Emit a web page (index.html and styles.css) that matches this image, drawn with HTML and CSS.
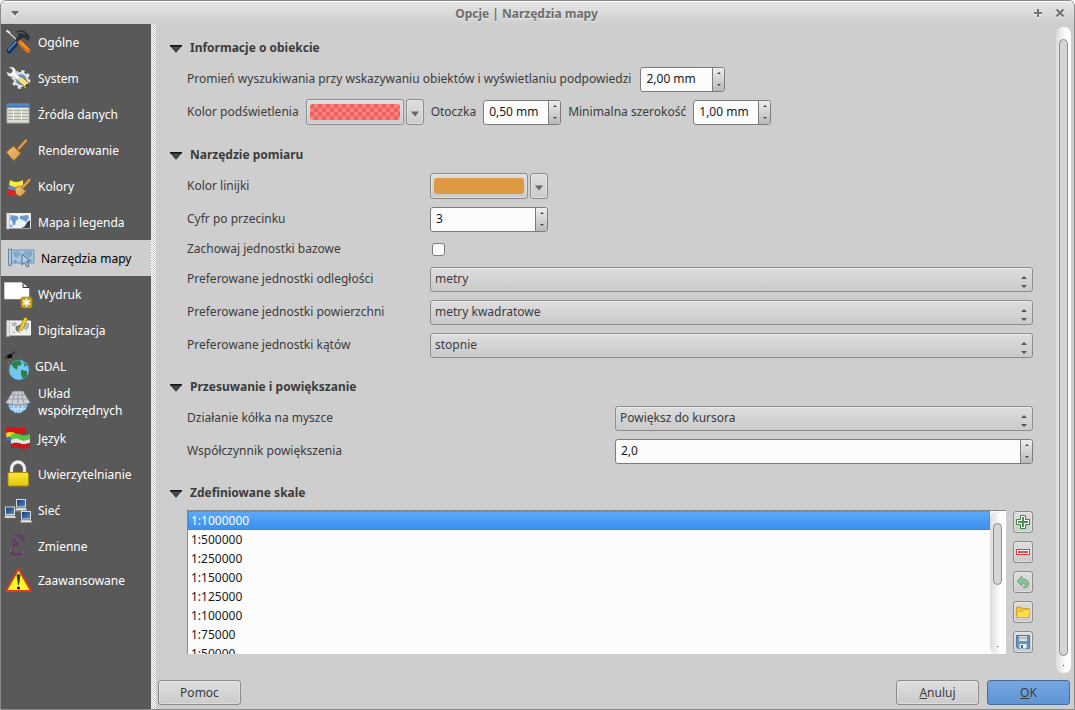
FILE: index.html
```html
<!DOCTYPE html>
<html lang="pl">
<head>
<meta charset="utf-8">
<title>Opcje | Narzędzia mapy</title>
<link rel="stylesheet" href="styles.css">
</head>
<body>
<svg class="defs" aria-hidden="true">
  <symbol id="up" viewBox="0 0 4 2"><path d="M0 2L2 0L4 2Z"/></symbol>
  <symbol id="down" viewBox="0 0 4 2"><path d="M0 0L2 2L4 0Z"/></symbol>
  <symbol id="fold" viewBox="0 0 12 8"><path d="M.5 .5H11.500L6 7.500Z" fill="#4a4a4a"/><path d="M.5 .8L6 7.200L11.500 .8" fill="none" stroke="#333"/><path d="M0 .8H12" stroke="#111" stroke-width="1.500"/></symbol>
  <linearGradient id="gold" x1="0" y1="0" x2="0" y2="1"><stop offset="0" stop-color="#f8e838"/><stop offset="1" stop-color="#e4c410"/></linearGradient>
  <linearGradient id="wood" x1="0" y1="0" x2="1" y2="1"><stop offset="0" stop-color="#f3c887"/><stop offset="1" stop-color="#d8963f"/></linearGradient>
  <linearGradient id="screen" x1="0" y1="0" x2="1" y2="1"><stop offset="0" stop-color="#0d3878"/><stop offset="1" stop-color="#5b8cc8"/></linearGradient>
</svg>
<div class="window">
  <header class="titlebar">
    <button class="tb" aria-label="Menu okna"><svg width="10" height="7" viewBox="0 0 10 7"><path d="M1 1H9L5 5.500Z" fill="#666"/><path d="M2 5L5 7L8 4" fill="none" stroke="#fff" stroke-opacity=".6"/></svg></button>
    <h1>Opcje | Narzędzia mapy</h1>
    <button class="tb" aria-label="Maksymalizuj"><svg width="10" height="10" viewBox="0 0 10 10"><path d="M1 6H9M5 2V10" stroke="#fff" stroke-width="2"/><path d="M1 5H9M5 1V9" stroke="#737373" stroke-width="2"/></svg></button>
    <button class="tb" aria-label="Zamknij"><svg width="10" height="10" viewBox="0 0 10 10"><path d="M1.500 2.500L8.500 9.500M8.500 2.500L1.500 9.500" stroke="#fff" stroke-width="2"/><path d="M1.500 1.500L8.500 8.500M8.500 1.500L1.500 8.500" stroke="#737373" stroke-width="2.300"/></svg></button>
  </header>
  <div class="body">
    <nav class="sidebar">
      <button class="item"><svg viewBox="0 0 34 36"><path d="M6 7L17 17" stroke="#d4d4d4" stroke-width="1.200"/><path d="M5.500 6.500L9 9" stroke="#f4f4f4" stroke-width="2"/><path d="M15 8C19 5 24 6 27 10L29 13L27 17L24 14L21 14L17 18L14.500 15.500L18 11Z" fill="#2b3133"/><path d="M16 9Q20 7 24 10" stroke="#616a6c" fill="none"/><path d="M16 18.500L8 27" stroke="#17355e" stroke-width="5" stroke-linecap="round"/><path d="M15 18L7.500 26" stroke="#5b8dca" stroke-width="1.600" stroke-linecap="round"/><path d="M19 18.500L27 26.500" stroke="#e8700a" stroke-width="4.600" stroke-linecap="round"/><path d="M19.500 18L27 25" stroke="#ffa24a" stroke-width="1.300"/></svg><span>Ogólne</span></button>
      <button class="item"><svg viewBox="0 0 34 36"><circle cx="20" cy="19.500" r="8" fill="none" stroke="#e5e8e8" stroke-width="3" stroke-dasharray="3.140 3.140"/><circle cx="20" cy="19.500" r="6.500" fill="#6c9bcb" stroke="#e4e6e6" stroke-width="2"/><path d="M8 7.500C12 6 15.500 9 15 13L20 18.500L18 21L12 16.500C9 17.500 6 15.500 5.700 12L9 13.500L11.500 12L11 9Z" fill="#f6f7f7" stroke="#999" stroke-width=".5"/><path d="M18.500 18.500L26.500 25.500" stroke="#6d5818" stroke-width="6.600"/><path d="M18.500 18.500L26 25" stroke="#f1df82" stroke-width="5"/><circle cx="26" cy="25.500" r="1.500" fill="#4a3d16"/></svg><span>System</span></button>
      <button class="item"><svg viewBox="0 0 34 36"><path d="M6 8H28V27H6Z" fill="#dcded3" stroke="#a9ada6"/><path d="M5.500 7.500H28.500V11.500H5.500Z" fill="#3f6fae"/><path d="M6 9H28" stroke="#6f9dd6"/><path d="M7 14.500H27M7 17.500H27M7 20.500H27M7 23.500H27" stroke="#a4a89f"/><path d="M12.500 12V26M20.500 12V26" stroke="#eceee6"/></svg><span>Źródła danych</span></button>
      <button class="item"><svg viewBox="0 0 34 36"><path d="M25 8.500L16.500 18" stroke="#9b611b" stroke-width="3.200" stroke-linecap="round"/><path d="M25 8.500L16.500 18" stroke="#e0a04c" stroke-width="2" stroke-linecap="round"/><path d="M5.500 20L13 14L20 21L13 28.500Q9 25 5.500 20Z" fill="url(#wood)" stroke="#b87427" stroke-width=".8"/><path d="M13 14L20 21" stroke="#8e560f" stroke-width="1.200"/><path d="M8 19L13 25M11 17L16 23" stroke="#dda255"/></svg><span>Renderowanie</span></button>
      <button class="item"><svg viewBox="0 0 34 36"><path d="M9 12Q15 16 22 12V18L15 20L8 17Z" fill="#fbe83a"/><path d="M8 17Q12 21 18 18L17 23L7 21Z" fill="#558bd0"/><path d="M7 21Q12 24 17 22L18 28Q12 26 6 27Z" fill="#e8201c"/><path d="M28.500 12L20 21" stroke="#9b611b" stroke-width="3.200" stroke-linecap="round"/><path d="M28.500 12L20 21" stroke="#e0a04c" stroke-width="2" stroke-linecap="round"/><path d="M14 21L18.500 17.500L25 23.500L19 28.500L15 26Z" fill="url(#wood)" stroke="#a7651a" stroke-width=".7"/></svg><span>Kolory</span></button>
      <button class="item"><svg viewBox="0 0 34 36"><path d="M8 10H29V23.500H8Z" fill="#edf2f6" stroke="#f3f3f3" stroke-width="1.800"/><path d="M5.500 9V25H8.500V9Z" fill="#e7e9eb" stroke="#9fa3a8" stroke-width=".6"/><path d="M10 11L16 12L18 14L15 17L14 21L12 21L11 17L9 15ZM19 12L27 11L28 14L25 18L22 16L19 15ZM10 20L12 23H9Z" fill="#6d9bd0"/><path d="M29 16V24H20Q25 23 25 19Z" fill="#36414b"/><path d="M20 24Q24 20 22 18L26 19Z" fill="#fff"/></svg><span>Mapa i legenda</span></button>
      <button class="item selected" aria-current="page"><svg viewBox="0 0 34 36"><path d="M9 10H33V23H9Z" fill="#a6c5df" stroke="#6e94b6"/><path d="M7.500 9V25.500H10.500V9Z" fill="#acc8e0" stroke="#55799c" stroke-width=".8"/><path d="M12 12L18 11L20 14L16 18L13 16ZM22 12L31 11V16L27 19L24 15Z" fill="#86a8c5"/><path d="M13 20L16 21L15 23H13ZM27 19L31 20V21H28Z" fill="#7598b7"/><path d="M21 14V25L23.500 22.500L26 27L28 26L25.500 21.500H29Z" fill="#b4cde2" stroke="#4f6f8f"/></svg><span>Narzędzia mapy</span></button>
      <button class="item"><svg viewBox="0 0 34 36"><path d="M3.500 6.500H22L28 12V23H3.500Z" fill="#fff" stroke="#ddd" stroke-width=".6"/><path d="M22 6V11.500H28Z" fill="#e4e4e4" stroke="#333"/><rect x="20" y="21" width="11" height="11" rx="2" fill="#c69d16" stroke="#a88410" stroke-width=".6"/><path d="M25.500 22.500V30.500M22 24.500L29 28.500M29 24.500L22 28.500" stroke="#fff" stroke-width="1.700"/></svg><span>Wydruk</span></button>
      <button class="item"><svg viewBox="0 0 34 36"><path d="M7 9H29.500V23H7Z" fill="#ededeb" stroke="#fff"/><path d="M5.500 8.500V24.500H8.500V8.500Z" fill="#e2e2e0" stroke="#aaa" stroke-width=".6"/><path d="M10 11L15 10L16 13L12 15ZM19 11H28V15L25 19L22 15ZM11 19L14 20L13 22Z" fill="#b5b6b2"/><path d="M15 15L19 13L20 17L18 20L15 18Z" fill="#858784" stroke="#444" stroke-width=".6"/><path d="M25 6L19.500 18" stroke="#8c7312" stroke-width="4"/><path d="M25 6L19.800 17.500" stroke="#f5d326" stroke-width="2.800"/><path d="M17.700 17L18 21.500L21.300 18.700Z" fill="#e8cc60"/></svg><span>Digitalizacja</span></button>
      <button class="item gdal"><svg viewBox="0 0 34 36"><circle cx="18" cy="22" r="10" fill="#71c7ed" stroke="#4c9cc0" stroke-width=".6"/><path d="M12 14L18 12L21 15L19 18L17 17L16 22L13 20L10 16ZM22 14L26 17L24 19ZM20 22L26 23L26 28L22 31L20 26Z" fill="#2e7f44"/><path d="M4 10L7 9M10 7L14 4" stroke="#3c3c3c" stroke-width="2"/><path d="M6.500 8.500L11 8" stroke="#000" stroke-width="3.400"/><path d="M9 11L13 15M7 13L9 20" stroke="#d06a6a" stroke-width=".8" stroke-dasharray="2 1"/></svg><span>GDAL</span></button>
      <button class="item"><svg viewBox="0 0 34 36"><circle cx="17" cy="19" r="10" fill="#8dc0ec" stroke="#4d83bd" stroke-width=".8"/><path d="M9 25H25M17 19V29M12 19Q12 25 15 29M22 19Q22 25 19 29" fill="none" stroke="#e4f2fd" stroke-width=".9"/><path d="M12 7H22L29.500 19Q17 23 4.500 19Z" fill="#ccd0d4" stroke="#6d737a" stroke-width=".7"/><path d="M10 11H24M7.500 15H27M17 7V20M14 7L11 20M20 7L23 20" stroke="#8a9097" stroke-width=".8"/></svg><span>Układ współrzędnych</span></button>
      <button class="item"><svg viewBox="0 0 34 36"><path d="M5 8Q9 6.500 14 7.500T25 7.500V14H14Q9 11.500 5 13Z" fill="#d01616"/><path d="M5 13Q9 11 14 13V18H5.500Z" fill="#f4d71d"/><path d="M5.500 17.500Q8 16 10 17V22Q8 20 6 21.500Z" fill="#3f70bf"/><path d="M10 14.500Q15 12.500 19 14.500T29 14V19Q24 21 19 19.500T10 20Z" fill="#5cc43a"/><path d="M10 20Q15 17.500 19 19.500T29 19V23Q24 25 19 23.500T10 24Z" fill="#e4e4e2"/><path d="M10 24Q15 22 19 23.500T29 23V28Q24 29.500 19 28T10 28.500Z" fill="#c81818"/></svg><span>Język</span></button>
      <button class="item"><svg viewBox="0 0 34 36"><path d="M10.500 17V13A6.500 7 0 0 1 23.500 13V17" fill="none" stroke="#777" stroke-width="4.500"/><path d="M10.500 17V13A6.500 7 0 0 1 23.500 13V17" fill="none" stroke="#f0f0f0" stroke-width="2.800"/><rect x="7" y="16.500" width="20.500" height="13.500" rx="1.500" fill="url(#gold)" stroke="#a98d08"/></svg><span>Uwierzytelnianie</span></button>
      <button class="item"><svg viewBox="0 0 34 36"><path d="M14 19H22M20 16V21" stroke="#898989" stroke-width="1.200"/><g id="pc"><rect x="15.500" y="7.500" width="9" height="7.500" fill="url(#screen)" stroke="#d9dcd8"/><path d="M15 16H25L26 18.500H14.500Z" fill="#e4e6e2" stroke="#888" stroke-width=".5"/></g><use href="#pc" x="-11" y="7.500"/><use href="#pc" x="5" y="12"/></svg><span>Sieć</span></button>
      <button class="item"><svg viewBox="0 0 34 36"><path d="M22.500 12.500C23 8 17 6.500 14 9C11 12 13 16 18 16.500C12 16 8.500 19 10 23.500C11.500 28 19 27.500 23 23" fill="none" stroke="#613a66" stroke-width="2.600" stroke-linecap="round"/><path d="M12.500 10.500L14 8.500M9.500 24Q9 20 11 18.500M21 25.500L23.500 22.500" fill="none" stroke="#a98bb0" stroke-width=".8"/></svg><span>Zmienne</span></button>
      <button class="item last"><svg viewBox="0 0 34 32"><path d="M17.500 5L30 27H5Z" fill="#fdfb1f" stroke="#e8351e" stroke-width="1.800" stroke-linejoin="round"/><path d="M15.500 11Q17.500 9 19.500 11L18 21H17Z" fill="#3d3d3d"/><circle cx="17.500" cy="24" r="1.600" fill="#111"/></svg><span>Zaawansowane</span></button>
    </nav>
    <div class="splitter"></div>
    <main class="main">
      <div class="scrollarea">
        <div class="page">
          <section class="section identify">
            <h2><svg><use href="#fold"/></svg>Informacje o obiekcie</h2>
            <div class="rows">
              <div class="row wide"><label for="radius">Promień wyszukiwania przy wskazywaniu obiektów i wyświetlaniu podpowiedzi</label>
                <span class="spin w-l"><input id="radius" value="2,00 mm"><span class="steps"><button aria-label="Więcej"><svg><use href="#up"/></svg></button><button aria-label="Mniej"><svg><use href="#down"/></svg></button></span></span></div>
              <div class="row"><span>Kolor podświetlenia</span>
                <span class="colorpick"><button class="color" aria-label="Kolor podświetlenia"><i class="checker"></i></button><button class="drop" aria-label="Menu koloru"><svg width="8" height="6" viewBox="0 0 8 6"><path d="M0 .5H8L4 5.500Z" fill="#666"/></svg></button></span>
                <label for="buffer">Otoczka</label>
                <span class="spin w-s"><input id="buffer" value="0,50 mm"><span class="steps"><button aria-label="Więcej"><svg><use href="#up"/></svg></button><button aria-label="Mniej"><svg><use href="#down"/></svg></button></span></span>
                <label for="minw">Minimalna szerokość</label>
                <span class="spin w-s"><input id="minw" value="1,00 mm"><span class="steps"><button aria-label="Więcej"><svg><use href="#up"/></svg></button><button aria-label="Mniej"><svg><use href="#down"/></svg></button></span></span></div>
            </div>
          </section>
          <section class="section">
            <h2><svg><use href="#fold"/></svg>Narzędzie pomiaru</h2>
            <div class="rows">
              <div class="grid"><span>Kolor linijki</span>
                <span class="colorpick"><button class="color" aria-label="Kolor linijki"><i class="orange"></i></button><button class="drop" aria-label="Menu koloru linijki"><svg width="8" height="6" viewBox="0 0 8 6"><path d="M0 .5H8L4 5.500Z" fill="#666"/></svg></button></span></div>
              <div class="grid"><label for="digits">Cyfr po przecinku</label>
                <span class="spin w-xl"><input id="digits" value="3"><span class="steps"><button aria-label="Więcej"><svg><use href="#up"/></svg></button><button aria-label="Mniej"><svg><use href="#down"/></svg></button></span></span></div>
              <div class="grid short"><label for="keep">Zachowaj jednostki bazowe</label><input type="checkbox" id="keep"></div>
              <div class="grid"><label for="dist">Preferowane jednostki odległości</label><select id="dist"><option>metry</option></select></div>
              <div class="grid"><label for="area">Preferowane jednostki powierzchni</label><select id="area"><option>metry kwadratowe</option></select></div>
              <div class="grid"><label for="angle">Preferowane jednostki kątów</label><select id="angle"><option>stopnie</option></select></div>
            </div>
          </section>
          <section class="section">
            <h2><svg><use href="#fold"/></svg>Przesuwanie i powiększanie</h2>
            <div class="rows">
              <div class="grid half"><label for="wheel">Działanie kółka na myszce</label><select id="wheel"><option>Powiększ do kursora</option></select></div>
              <div class="grid half"><label for="zoom">Współczynnik powiększenia</label>
                <span class="spin"><input id="zoom" value="2,0"><span class="steps"><button aria-label="Więcej"><svg><use href="#up"/></svg></button><button aria-label="Mniej"><svg><use href="#down"/></svg></button></span></span></div>
            </div>
          </section>
          <section class="section scales">
            <h2><svg><use href="#fold"/></svg>Zdefiniowane skale</h2>
            <div class="scalebox">
              <div class="list">
                <ul>
                  <li class="on">1:1000000</li><li>1:500000</li><li>1:250000</li><li>1:150000</li><li>1:125000</li><li>1:100000</li><li>1:75000</li><li>1:50000</li>
                </ul>
                <div class="bar inner"><div class="thumb"></div></div>
              </div>
              <div class="tools">
                <button aria-label="Dodaj skalę"><svg viewBox="0 0 16 16"><path d="M5.500 1.500H10.500V5.500H14.500V10.500H10.500V14.500H5.500V10.500H1.500V5.500H5.500Z" fill="#fff" stroke="#3f8147"/><path d="M8 3V13M3 8H13" stroke="#4a9152" stroke-width="2"/></svg></button>
                <button aria-label="Usuń skalę"><svg viewBox="0 0 16 16"><rect x="1.500" y="5.500" width="13" height="5" fill="#fff" stroke="#e63c3c"/><path d="M3 8H13" stroke="#e84b4b" stroke-width="2"/></svg></button>
                <button aria-label="Przywróć domyślne"><svg viewBox="0 0 16 16"><path d="M2 7L7 2V5C12 5 15 8 13 12C12 14 10 14 8 13.500C11 13 11.500 9 7 9V12Z" fill="#8cc096" stroke="#5f9f6c" stroke-width=".8"/></svg></button>
                <button aria-label="Wczytaj z pliku"><svg viewBox="0 0 16 16"><path d="M1.500 13.500V3H6L7 4.500H14V13.500Z" fill="#f2c62e" stroke="#c9981b" stroke-width=".8"/><path d="M1.500 13.500L3 7.500H8L10 5.500H15L13.500 13.500Z" fill="#ffdc55" stroke="#d6a723" stroke-width=".6"/></svg></button>
                <button aria-label="Zapisz do pliku"><svg viewBox="0 0 16 16"><path d="M1.500 1.500H14.500V14.500H3L1.500 13Z" fill="#6692c4" stroke="#55799f"/><path d="M4 2H12V7H4Z" fill="#dedede"/><path d="M4 4H12" stroke="#999"/><path d="M4.500 10H11.500V14.500H4.500Z" fill="#f0f0f0"/><path d="M6 11H8V14H6Z" fill="#41658f"/></svg></button>
              </div>
            </div>
          </section>
        </div>
        <div class="bar outer"><div class="thumb"></div></div>
      </div>
      <footer class="actions"><button>Pomoc</button><span class="grow"></span><button><u>A</u>nuluj</button><button class="primary"><u>O</u>K</button></footer>
    </main>
  </div>
</div>
</body>
</html>
```
FILE: styles.css
```css
* { box-sizing: border-box; }
body { margin: 0; background: #fff; font: 12px/18px "Noto Sans", sans-serif; color: #3c3c3c; }
button, input, select { font: inherit; color: inherit; margin: 0; padding: 0; }
button { border: 0; background: none; }
svg { display: block; flex: none; }
.defs { position: absolute; width: 0; height: 0; }

.window { height: 100vh; display: flex; flex-direction: column; border: 1px solid #8a8a8a; border-radius: 6px 6px 0 0; background: #cecece; overflow: hidden; }
.titlebar { height: 23px; flex: none; display: flex; align-items: center; gap: 2px; padding: 0 4px; background: linear-gradient(#e6e6e6, #cecece); border-top: 1px solid #fff; }
.titlebar h1 { flex: 1; margin: 0; text-align: center; font-size: 12px; line-height: 18px; padding-top: 2px; color: #6d6d6d; text-shadow: 0 1px #eee; }
.tb { width: 20px; height: 20px; display: grid; place-items: center; }

.body { flex: 1; display: flex; min-height: 0; }
.sidebar { width: 150px; flex: none; background: #595959; color: #fff; }
.item { display: flex; align-items: center; gap: 3px; width: 100%; height: 36px; text-align: left; line-height: 17px; }
.item svg { width: 34px; height: 36px; }
.item.selected { background: #cecece; color: #000; gap: 6px; }
.item.gdal { gap: 0; }
.item.last, .item.last svg { height: 32px; }
.splitter { width: 5px; flex: none; background: url("data:image/svg+xml,%3Csvg xmlns='http://www.w3.org/2000/svg' width='2' height='2'%3E%3Cpath d='M0 0H1V1H0ZM1 1H2V2H1Z' fill='%23fff'/%3E%3C/svg%3E"); }

.main { flex: 1; min-width: 0; display: flex; flex-direction: column; }
.scrollarea { flex: 1; min-height: 0; display: flex; padding: 3px 3px 0 0; }
.page { flex: 1; min-width: 0; padding: 10px 23px 0 14px; display: flex; flex-direction: column; gap: 18px; }
.section { display: flex; flex-direction: column; gap: 7px; }
.identify { padding-bottom: 1px; }
.scales { gap: 6px; }
h2 { margin: 0; font-size: 12px; line-height: 22px; display: flex; align-items: center; gap: 8px; }
h2 svg { width: 12px; height: 8px; margin-top: 2px; }
.rows { display: flex; flex-direction: column; gap: 7px; padding-left: 17px; }
.row { display: flex; align-items: center; gap: 7px; height: 26px; }
.row.wide { gap: 9px; }
.grid { display: grid; grid-template-columns: 235px 1fr; column-gap: 8px; align-items: center; height: 26px; }
.short { height: 20px; }
.half { grid-template-columns: 1fr 1fr; column-gap: 10px; }

.spin { display: flex; height: 25px; border: 1px solid #7c7c7c; border-radius: 3px; overflow: hidden; background: #fcfcfc; }
.spin input { flex: 1; min-width: 0; border: 0; outline: 0; background: none; padding-left: 5px; color: #1a1a1a; }
.steps { width: 12px; display: flex; flex-direction: column; border-left: 1px solid #7c7c7c; background: linear-gradient(#eee, #b8b8b8); }
.steps button { flex: 1; display: grid; place-items: center; }
.steps svg { width: 4px; height: 2px; fill: #444; }
.w-l { width: 85px; }
.w-s { width: 78px; }
.w-xl { width: 118px; }

.colorpick { display: flex; gap: 2px; }
.color, .drop, .tools button, .actions button { border: 1px solid #8c8c8c; border-radius: 3px; background: linear-gradient(#dedede, #cbcbcb); box-shadow: inset 0 0 0 1px #ececec88; }
.color { width: 98px; height: 26px; padding: 3px; }
.color i { display: block; height: 16px; border-radius: 3px; }
.checker { background: repeating-conic-gradient(#ff7e7e 0 25%, #e86262 0 50%) 0 0 / 8px 8px; }
.orange { background: #de9a42; }
.drop { width: 18px; height: 26px; display: grid; place-items: center; padding-top: 3px; }

select { appearance: none; width: 100%; height: 25px; border: 1px solid #8c8c8c; border-radius: 3px; padding: 0 20px 0 4px; box-shadow: inset 0 1px #eee;
  background: url("data:image/svg+xml,%3Csvg xmlns='http://www.w3.org/2000/svg' width='6' height='12'%3E%3Cpath d='M0 3L3 0L6 3ZM0 9L3 12L6 9Z' fill='%23555'/%3E%3C/svg%3E") right 5px top 8px no-repeat, linear-gradient(#dedede, #cacaca); }
input[type="checkbox"] { appearance: none; width: 13px; height: 13px; margin-left: 2px; border: 1px solid #7c7c7c; border-radius: 3px; background: #fcfcfc; }

.scalebox { display: flex; gap: 7px; padding-left: 17px; height: 144px; }
.list { flex: 1; display: flex; background: #fcfcfc; border: solid #888; border-width: 1px 0 0 1px; overflow: hidden; }
ul { flex: 1; margin: 0; padding: 0; list-style: none; color: #1a1a1a; }
li { height: 19px; line-height: 19px; padding-left: 3px; }
.on { color: #fff; background: linear-gradient(#5eaafa, #3a8eec); outline: 1px dotted #6a7a8a; outline-offset: -1px; }
.tools { display: flex; flex-direction: column; gap: 8px; padding-top: 1px; }
.tools button { width: 20px; height: 22px; display: grid; place-items: center; }
.tools svg { width: 16px; height: 16px; }

.bar { width: 15px; flex: none; border-radius: 7px; background: linear-gradient(90deg, #dcdcdc, #fff 70%); }
.thumb { width: 9px; margin: 0 auto; border: 1px solid #8c8c8c; border-radius: 5px; background: #d5d5d5; }
.bar::after { content: ""; display: block; width: 1px; height: 1px; margin: 9px auto 0; background: #444; }
.outer { display: flex; flex-direction: column; padding: 12px 0 7px; }
.outer .thumb { flex: 1; }
.inner { width: 16px; padding: 12px 1px 7px 0; display: flex; flex-direction: column; justify-content: space-between; }
.inner .thumb { height: 62px; }

.actions { display: flex; gap: 8px; padding: 7px 4px 4px 2px; }
.actions button { width: 83px; height: 25px; }
.actions .primary { background: linear-gradient(#74a6e2, #5f95d4); border-color: #4a6c96; box-shadow: none; }
.grow { flex: 1; }
```
